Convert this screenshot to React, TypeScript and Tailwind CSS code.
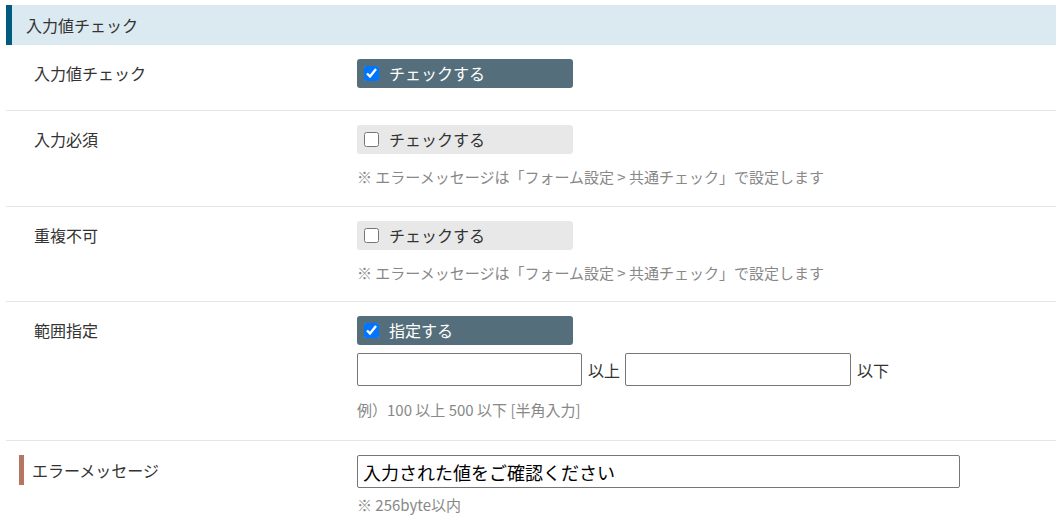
import React from "react";

const font = {
  fontFamily: '"Noto Sans CJK JP", "Noto Sans", sans-serif',
};

function CheckBox({ checked, label }: { checked: boolean; label: string }) {
  return (
    <label
      className={
        "flex items-center w-[216px] h-[29px] rounded-[3px] pl-[7px] gap-[10px] text-[16px] " +
        (checked ? "bg-[#546f7b] text-white" : "bg-[#e8e8e8] text-[#333]")
      }
    >
      <input type="checkbox" defaultChecked={checked} className="w-[15px] h-[15px] m-0" />
      <span className="leading-[29px]">{label}</span>
    </label>
  );
}

function Row({
  label,
  children,
  last,
  bar,
  pb = "pb-[20px]",
}: {
  label: string;
  children: React.ReactNode;
  last?: boolean;
  bar?: boolean;
  pb?: string;
}) {
  return (
    <div className={"flex ml-[6px] pt-[14px] " + pb + (last ? "" : " border-b border-[#e6e6e6]")}>
      <div className="w-[351px] shrink-0">
        {bar ? (
          <div className="flex items-center ml-[13px] h-[30px] border-l-[5px] border-[#b57562] pl-[8px] text-[16px] text-[#333]">
            {label}
          </div>
        ) : (
          <div className="pl-[28px] leading-[29px] text-[16px] text-[#333]">{label}</div>
        )}
      </div>
      <div className="flex flex-col">{children}</div>
    </div>
  );
}

const note =
  "※ エラーメッセージは「フォーム設定 > 共通チェック」で設定します";

export default function App() {
  return (
    <div style={font} className="bg-white w-[1056px] h-[527px] overflow-hidden pt-[5px]">
      <div className="ml-[6px] h-[40px] bg-[#dbe9f0] border-l-[6px] border-[#005b7f] flex items-center pl-[14px] text-[16px] text-[#333]">
        入力値チェック
      </div>

      <Row label="入力値チェック" pb="pb-[22px]">
        <CheckBox checked label="チェックする" />
      </Row>

      <Row label="入力必須" pb="pb-[19px]">
        <CheckBox checked={false} label="チェックする" />
        <div className="mt-[13px] leading-[20px] text-[15px] text-[#888]">{note}</div>
      </Row>

      <Row label="重複不可" pb="pb-[18px]">
        <CheckBox checked={false} label="チェックする" />
        <div className="mt-[13px] leading-[20px] text-[15px] text-[#888]">{note}</div>
      </Row>

      <Row label="範囲指定">
        <CheckBox checked label="指定する" />
        <div className="flex items-center mt-[8px] text-[16px] text-[#333]">
          <input
            type="text"
            className="w-[225px] h-[33px] border border-[#767676] rounded-[2px] outline-none px-[4px]"
          />
          <span className="ml-[6px] mr-[5px]">以上</span>
          <input
            type="text"
            className="w-[226px] h-[33px] border border-[#767676] rounded-[2px] outline-none px-[4px]"
          />
          <span className="ml-[6px]">以下</span>
        </div>
        <div className="mt-[14px] leading-[20px] text-[15px] text-[#888]">
          例）100 以上 500 以下 [半角入力]
        </div>
      </Row>

      <Row label="エラーメッセージ" bar last>
        <input
          type="text"
          defaultValue="入力された値をご確認ください"
          style={font}
          className="w-[603px] h-[33px] border border-[#767676] rounded-[2px] outline-none pl-[5px] text-[18px] text-black"
        />
        <div className="mt-[7px] leading-[20px] text-[15px] text-[#888]">※ 256byte以内</div>
      </Row>
    </div>
  );
}
